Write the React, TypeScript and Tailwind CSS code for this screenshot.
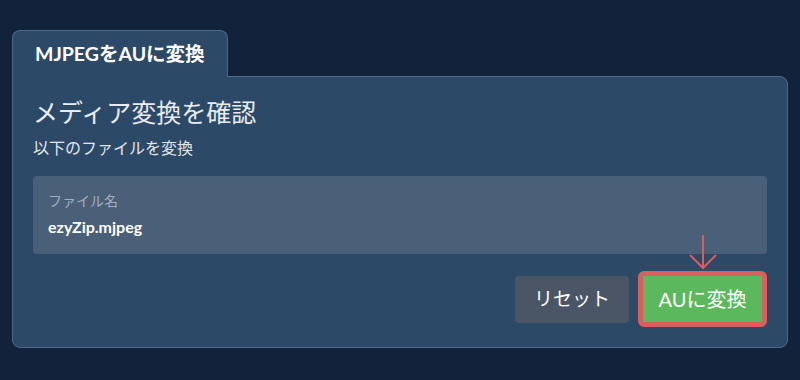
import React from 'react';

const font = { fontFamily: 'Lato, "Noto Sans CJK JP", sans-serif' };

const App: React.FC = () => {
  return (
    <div
      className="w-[800px] h-[380px] bg-[#12223a] pt-[30px] px-[12px] font-['Lato','Noto_Sans_CJK_JP',sans-serif]"
      style={font}
    >
      <div className="flex flex-col w-[776px]">
        {/* Tab */}
        <div className="self-start relative z-10 -mb-px h-[47px] px-[22px] flex items-center bg-[#2c4968] border border-b-0 border-[#4b6887] rounded-t-lg">
          <span className="text-[19.5px] font-bold text-white">MJPEGをAUに変換</span>
        </div>

        {/* Card */}
        <div className="bg-[#2c4968] border border-[#4b6887] rounded-b-lg rounded-tr-lg px-[20px] pt-[18px] pb-[20px]">
          <h2 className="text-[25px] leading-[34px] text-[#e8ecf0] font-normal">メディア変換を確認</h2>
          <p className="mt-[8px] text-[16px] leading-[22px] text-[#e3e7ec]">以下のファイルを変換</p>

          <div className="mt-[17px] h-[78px] bg-[#4a6078] rounded px-[15px] pt-[15px]">
            <div className="text-[14px] leading-[19px] text-[#a3afbd]">ファイル名</div>
            <div className="mt-[6px] text-[16px] leading-[21px] font-bold text-white">ezyZip.mjpeg</div>
          </div>

          <div className="mt-[17px] flex justify-end items-center gap-[9px]">
            <button className="h-[47px] w-[114px] rounded bg-[#4a5666] text-white text-[19px]">
              リセット
            </button>
            <div className="relative border-[5px] border-[#d9605a] rounded-md">
              <button className="block h-[46px] w-[119px] bg-[#5cb85c] text-white text-[20px]">
                AUに変換
              </button>
              <svg
                className="absolute left-1/2 -translate-x-1/2 -top-[43px]"
                width="30"
                height="38"
                viewBox="0 0 30 38"
                fill="none"
                stroke="#d9605a"
                strokeWidth="2"
              >
                <line x1="15" y1="2" x2="15" y2="35" />
                <polyline points="2,22 15,35 28,22" />
              </svg>
            </div>
          </div>
        </div>
      </div>
    </div>
  );
};

export default App;
